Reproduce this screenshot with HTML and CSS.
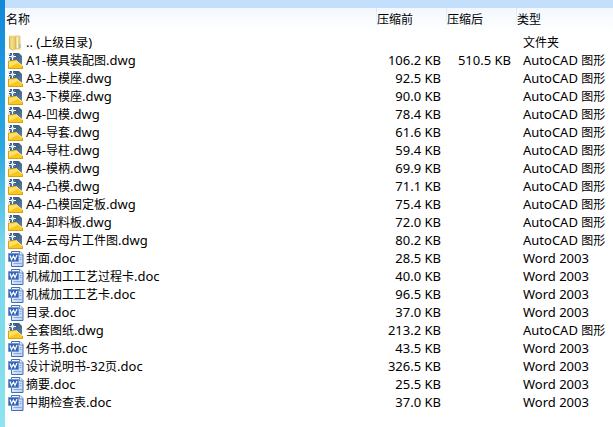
FILE: index.html
```
<!DOCTYPE html>
<html lang="zh-CN">
<head>
<meta charset="utf-8">
<title>压缩文件</title>
<link rel="stylesheet" href="styles.css">
</head>
<body>
<svg class="defs" aria-hidden="true">
  <defs>
    <linearGradient id="gold" x1="0" y1="0" x2="1" y2="0"><stop offset="0" stop-color="#f6e39c"/><stop offset="1" stop-color="#e2bf52"/></linearGradient>
    <linearGradient id="steel" x1="0" y1="0" x2="1" y2="1"><stop offset="0" stop-color="#274a70"/><stop offset="1" stop-color="#6284a6"/></linearGradient>
    <linearGradient id="sheet" x1="0" y1="0" x2="1" y2="1"><stop offset="0" stop-color="#ffffff"/><stop offset="1" stop-color="#b4cdf5"/></linearGradient>
    <symbol id="folder" viewBox="0 0 16 16">
      <path d="M1 1l3-.5 4 1v12l-3 2-4-2z" fill="#ecd27c"/>
      <path d="M6.500.5h5l1 1v13H6.500z" fill="#e9cf78"/>
      <path d="M8 2h2v11H8z" fill="#fff6cf"/>
      <path d="M3.500 3L8 2v12l-3 1.500-1.500-1z" fill="url(#gold)"/>
      <path d="M1.500 1.500v11.500l3 2M8 2v12" fill="none" stroke="#d0ad48" stroke-width=".8"/>
      <path d="M12 9v4" stroke="#67b6dc"/>
    </symbol>
    <symbol id="dwg" viewBox="0 0 16 16">
      <path d="M1 0h10l3 3v10H1z" fill="url(#steel)"/>
      <path d="M0 0h2v2H0zM0 5h2v3H0z" fill="#d4e3ef"/>
      <path d="M4.500 0v7M1 3.500h7" stroke="#fff" stroke-width="1.200"/>
      <path d="M2.500 1.500l4 4M6.500 1.500l-4 4" stroke="#a8cdea" stroke-width=".8"/>
      <path d="M0 8l8-1 7 6v3H0z" fill="#fac71d"/>
      <path d="M1 9l7-1 2 2-9 4z" fill="#ffe06c"/>
      <path d="M8 7.500l7 6" stroke="#fff0b0"/>
      <path d="M.5 8v7.500h14V13" fill="none" stroke="#dba111"/>
    </symbol>
    <symbol id="doc" viewBox="0 0 16 16">
      <path d="M3.500.5h8.500l3 3v12H3.500z" fill="url(#sheet)" stroke="#446eb4"/>
      <path d="M11.500.5v3.500H15" fill="#eaf2ff" stroke="#446eb4" stroke-width=".8"/>
      <path d="M11.500 6.500h2M11.500 8.500h2M5.500 12.500h8" stroke="#7699d1" stroke-width=".8"/>
      <path d="M.5 2.500h10v8H.5z" fill="#3263b7" stroke="#6e94d2"/>
      <path d="M2 4.500l1.500 4L5.500 5l1.500 3.500L9 4" fill="none" stroke="#fff" stroke-width="1.200"/>
    </symbol>
  </defs>
</svg>
<div class="window">
  <div class="edge"></div>
  <main class="pane">
    <div class="topbar"></div>
    <table class="files">
      <colgroup><col><col class="size"><col class="size"><col class="type"></colgroup>
      <thead><tr><th>名称</th><th>压缩前</th><th>压缩后</th><th>类型</th></tr></thead>
      <tbody>
        <tr><td><svg class="icon"><use href="#folder"/></svg>.. (<span>上级目录</span>)</td><td></td><td></td><td><span>文件夹</span></td></tr>
        <tr><td><svg class="icon"><use href="#dwg"/></svg>A1-<span>模具装配图</span>.dwg</td><td>106.2 KB</td><td>510.5 KB</td><td>AutoCAD <span>图形</span></td></tr>
        <tr><td><svg class="icon"><use href="#dwg"/></svg>A3-<span>上模座</span>.dwg</td><td>92.5 KB</td><td></td><td>AutoCAD <span>图形</span></td></tr>
        <tr><td><svg class="icon"><use href="#dwg"/></svg>A3-<span>下模座</span>.dwg</td><td>90.0 KB</td><td></td><td>AutoCAD <span>图形</span></td></tr>
        <tr><td><svg class="icon"><use href="#dwg"/></svg>A4-<span>凹模</span>.dwg</td><td>78.4 KB</td><td></td><td>AutoCAD <span>图形</span></td></tr>
        <tr><td><svg class="icon"><use href="#dwg"/></svg>A4-<span>导套</span>.dwg</td><td>61.6 KB</td><td></td><td>AutoCAD <span>图形</span></td></tr>
        <tr><td><svg class="icon"><use href="#dwg"/></svg>A4-<span>导柱</span>.dwg</td><td>59.4 KB</td><td></td><td>AutoCAD <span>图形</span></td></tr>
        <tr><td><svg class="icon"><use href="#dwg"/></svg>A4-<span>模柄</span>.dwg</td><td>69.9 KB</td><td></td><td>AutoCAD <span>图形</span></td></tr>
        <tr><td><svg class="icon"><use href="#dwg"/></svg>A4-<span>凸模</span>.dwg</td><td>71.1 KB</td><td></td><td>AutoCAD <span>图形</span></td></tr>
        <tr><td><svg class="icon"><use href="#dwg"/></svg>A4-<span>凸模固定板</span>.dwg</td><td>75.4 KB</td><td></td><td>AutoCAD <span>图形</span></td></tr>
        <tr><td><svg class="icon"><use href="#dwg"/></svg>A4-<span>卸料板</span>.dwg</td><td>72.0 KB</td><td></td><td>AutoCAD <span>图形</span></td></tr>
        <tr><td><svg class="icon"><use href="#dwg"/></svg>A4-<span>云母片工件图</span>.dwg</td><td>80.2 KB</td><td></td><td>AutoCAD <span>图形</span></td></tr>
        <tr><td><svg class="icon"><use href="#doc"/></svg><span>封面</span>.doc</td><td>28.5 KB</td><td></td><td>Word 2003</td></tr>
        <tr><td><svg class="icon"><use href="#doc"/></svg><span>机械加工工艺过程卡</span>.doc</td><td>40.0 KB</td><td></td><td>Word 2003</td></tr>
        <tr><td><svg class="icon"><use href="#doc"/></svg><span>机械加工工艺卡</span>.doc</td><td>96.5 KB</td><td></td><td>Word 2003</td></tr>
        <tr><td><svg class="icon"><use href="#doc"/></svg><span>目录</span>.doc</td><td>37.0 KB</td><td></td><td>Word 2003</td></tr>
        <tr><td><svg class="icon"><use href="#dwg"/></svg><span>全套图纸</span>.dwg</td><td>213.2 KB</td><td></td><td>AutoCAD <span>图形</span></td></tr>
        <tr><td><svg class="icon"><use href="#doc"/></svg><span>任务书</span>.doc</td><td>43.5 KB</td><td></td><td>Word 2003</td></tr>
        <tr><td><svg class="icon"><use href="#doc"/></svg><span>设计说明书</span>-32<span>页</span>.doc</td><td>326.5 KB</td><td></td><td>Word 2003</td></tr>
        <tr><td><svg class="icon"><use href="#doc"/></svg><span>摘要</span>.doc</td><td>25.5 KB</td><td></td><td>Word 2003</td></tr>
        <tr><td><svg class="icon"><use href="#doc"/></svg><span>中期检查表</span>.doc</td><td>37.0 KB</td><td></td><td>Word 2003</td></tr>
      </tbody>
    </table>
  </main>
</div>
</body>
</html>
```
FILE: styles.css
```
body {
  margin: 0;
  background: #fff;
  color: #000;
  font: 13px/18px "Noto Sans", "Noto Sans CJK SC", sans-serif;
}

.defs {
  position: absolute;
  width: 0;
  height: 0;
}

.window {
  display: flex;
  min-height: 100vh;
}

.edge {
  flex: 0 0 5px;
  background: linear-gradient(#1288da, #2ba9e2 35%, #7cd9ec 58%, #7fdcea 80%, #8ee4f2);
}

.pane {
  flex: 1;
  min-width: 0;
}

.topbar {
  height: 8px;
  background: #c3dffb;
}

.files {
  width: 100%;
  table-layout: fixed;
  border-collapse: collapse;
}

.files .size {
  width: 70px;
}

.files .type {
  width: 97px;
}

.files th {
  height: 25px;
  padding: 0 0 2px 1px;
  background: linear-gradient(#f3f8fe, #fff);
  font-size: 12px;
  font-weight: normal;
  text-align: left;
  box-sizing: border-box;
}

.files th + th {
  background: linear-gradient(#d9e8f8, #fff) left / 1px 100% no-repeat, linear-gradient(#f3f8fe, #fff);
}

.files td {
  height: 18px;
  padding: 0 5px 0 3px;
  vertical-align: top;
  white-space: nowrap;
}

.files td:nth-child(2),
.files td:nth-child(3) {
  text-align: right;
}

.files td:last-child {
  padding: 0 0 0 7px;
}

.files span {
  font-size: 12px;
  line-height: 12px;
}

.icon {
  width: 16px;
  height: 16px;
  margin: 2px 2px 0 0;
  vertical-align: top;
}
```
